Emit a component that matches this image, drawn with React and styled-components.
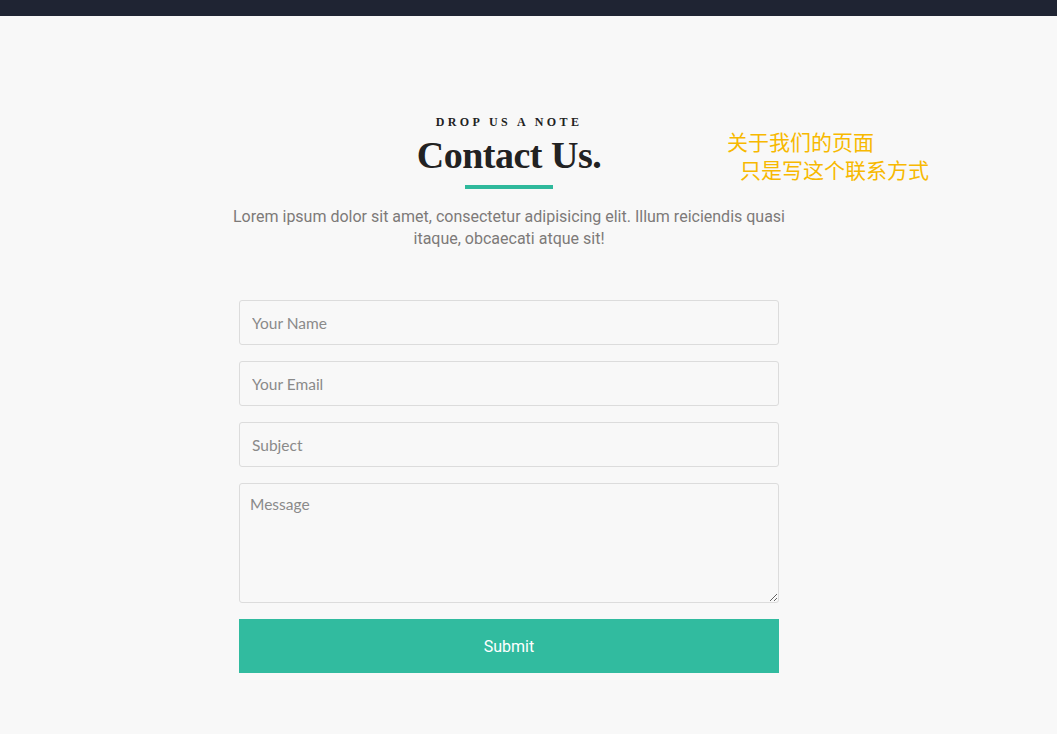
import React from "react";
import styled, { createGlobalStyle } from "styled-components";

const GlobalStyle = createGlobalStyle`
  html, body {
    margin: 0;
    padding: 0;
    background: #f8f8f8;
  }
  * {
    box-sizing: border-box;
  }
`;

const TopBar = styled.div`
  height: 16px;
  background-color: #1f2433;
`;

const Section = styled.section`
  position: relative;
  min-height: 718px;
  padding-top: 98px;
  padding-left: 229px;
`;

const Column = styled.div`
  width: 560px;
  display: flex;
  flex-direction: column;
  align-items: center;
`;

const Eyebrow = styled.h5`
  margin: 0;
  font-family: "Liberation Serif", "DejaVu Serif", serif;
  font-size: 12px;
  font-weight: 700;
  letter-spacing: 3.4px;
  color: #222;
  line-height: 16px;
`;

const Title = styled.h2`
  margin: 3px 0 0;
  font-family: "Liberation Serif", "DejaVu Serif", serif;
  font-size: 38px;
  font-weight: 700;
  letter-spacing: -0.5px;
  line-height: 44px;
  color: #222;
`;

const Underline = styled.span`
  display: block;
  width: 88px;
  height: 4px;
  margin-top: 8px;
  background-color: #2fb99c;
`;

const Lead = styled.p`
  margin: 17px 0 0;
  font-family: Roboto, "Liberation Sans", sans-serif;
  font-size: 16px;
  line-height: 22px;
  color: #7d7a78;
  text-align: center;
`;

const Form = styled.form`
  width: 540px;
  margin-top: 50px;
  display: flex;
  flex-direction: column;
  gap: 16px;
`;

const Field = styled.input`
  width: 100%;
  height: 45px;
  padding: 0 12px;
  border: 1px solid #dcdcdc;
  border-radius: 3px;
  background: #f8f8f8;
  font-family: Lato, "Open Sans", sans-serif;
  font-size: 15.5px;
  color: #555;
  outline: none;

  &::placeholder {
    color: #8a8a8a;
  }
`;

const MessageBox = styled.textarea`
  width: 100%;
  height: 120px;
  padding: 11px 10px;
  border: 1px solid #dcdcdc;
  border-radius: 3px;
  background: #f8f8f8;
  font-family: Lato, "Open Sans", sans-serif;
  font-size: 15.5px;
  color: #555;
  resize: vertical;
  outline: none;
  display: block;

  &::placeholder {
    color: #8a8a8a;
  }
`;

const SubmitButton = styled.button`
  width: 100%;
  height: 54px;
  border: none;
  background-color: #31bb9f;
  color: #fff;
  font-family: Roboto, "Liberation Sans", sans-serif;
  font-size: 16px;
  cursor: pointer;
`;

const Note = styled.div`
  position: absolute;
  top: 111px;
  left: 727px;
  font-family: "Noto Sans CJK SC", sans-serif;
  font-size: 21px;
  line-height: 28px;
  color: #f7b900;
`;

const NoteLine = styled.div`
  padding-left: ${(p) => (p.$indent ? "13px" : "0")};
`;

export default function App() {
  return (
    <>
      <GlobalStyle />
      <TopBar />
      <Section>
        <Column>
          <Eyebrow>DROP US A NOTE</Eyebrow>
          <Title>Contact Us.</Title>
          <Underline />
          <Lead>
            Lorem ipsum dolor sit amet, consectetur adipisicing elit. Illum
            reiciendis quasi itaque, obcaecati atque sit!
          </Lead>
          <Form onSubmit={(e) => e.preventDefault()}>
            <Field type="text" placeholder="Your Name" />
            <Field type="email" placeholder="Your Email" />
            <Field type="text" placeholder="Subject" />
            <MessageBox placeholder="Message" />
            <SubmitButton type="submit">Submit</SubmitButton>
          </Form>
        </Column>
        <Note>
          <NoteLine>关于我们的页面</NoteLine>
          <NoteLine $indent>只是写这个联系方式</NoteLine>
        </Note>
      </Section>
    </>
  );
}
